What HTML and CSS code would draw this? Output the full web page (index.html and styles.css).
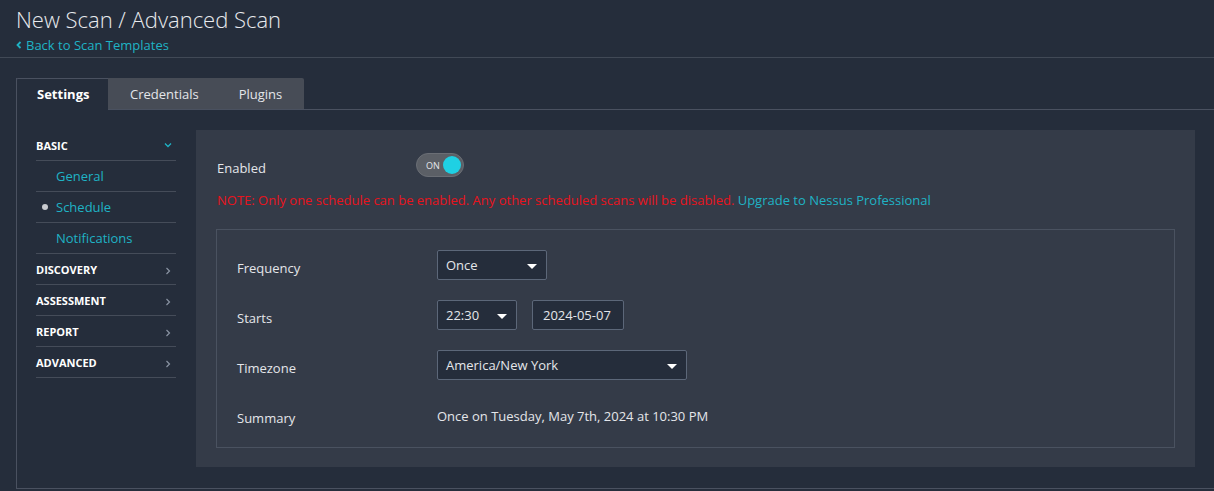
FILE: index.html
```html
<!DOCTYPE html>
<html>
<head>
<meta charset="utf-8">
<link rel="stylesheet" href="styles.css">
</head>
<body>
<header class="header">
  <h1 class="title">New Scan / Advanced Scan</h1>
  <a class="back"><svg class="back-icon" width="6" height="8" viewBox="0 0 6 8"><path d="M4.5 1 L1.5 4 L4.5 7" fill="none" stroke="currentColor" stroke-width="1.8"/></svg>Back to Scan Templates</a>
</header>
<div class="page">
  <div class="tabs">
    <div class="tab active">Settings</div>
    <div class="tab">Credentials</div>
    <div class="tab">Plugins</div>
    <div class="tab-fill"></div>
  </div>
  <div class="tab-body">
    <nav class="sidebar">
      <div class="sec">BASIC<svg class="chev" width="8" height="6" viewBox="0 0 8 6"><path d="M1 1.5 L4 4.5 L7 1.5" fill="none" stroke="currentColor" stroke-width="1.3"/></svg></div>
      <div class="sub">General</div>
      <div class="sub current"><span class="dot"></span>Schedule</div>
      <div class="sub">Notifications</div>
      <div class="sec">DISCOVERY<svg class="chev-r" width="6" height="8" viewBox="0 0 6 8"><path d="M1.5 1 L4.5 4 L1.5 7" fill="none" stroke="currentColor" stroke-width="1.2"/></svg></div>
      <div class="sec">ASSESSMENT<svg class="chev-r" width="6" height="8" viewBox="0 0 6 8"><path d="M1.5 1 L4.5 4 L1.5 7" fill="none" stroke="currentColor" stroke-width="1.2"/></svg></div>
      <div class="sec">REPORT<svg class="chev-r" width="6" height="8" viewBox="0 0 6 8"><path d="M1.5 1 L4.5 4 L1.5 7" fill="none" stroke="currentColor" stroke-width="1.2"/></svg></div>
      <div class="sec">ADVANCED<svg class="chev-r" width="6" height="8" viewBox="0 0 6 8"><path d="M1.5 1 L4.5 4 L1.5 7" fill="none" stroke="currentColor" stroke-width="1.2"/></svg></div>
    </nav>
    <main class="panel">
      <div class="enabled-row">
        <span class="label">Enabled</span>
        <div class="toggle"><span class="on">ON</span><span class="knob"></span></div>
      </div>
      <p class="note">NOTE: Only one schedule can be enabled. Any other scheduled scans will be disabled. <a class="link">Upgrade to Nessus Professional</a></p>
      <div class="box">
        <div class="row">
          <span class="label">Frequency</span>
          <div class="field">
            <div class="select w110">Once<span class="caret"></span></div>
          </div>
        </div>
        <div class="row">
          <span class="label">Starts</span>
          <div class="field">
            <div class="select w80">22:30<span class="caret"></span></div>
            <div class="input w92">2024-05-07</div>
          </div>
        </div>
        <div class="row">
          <span class="label">Timezone</span>
          <div class="field">
            <div class="select w250">America/New York<span class="caret"></span></div>
          </div>
        </div>
        <div class="row">
          <span class="label">Summary</span>
          <div class="field"><span class="summary">Once on Tuesday, May 7th, 2024 at 10:30 PM</span></div>
        </div>
      </div>
    </main>
  </div>
</div>
</body>
</html>
```
FILE: styles.css
```css
* { box-sizing: border-box; }
html, body { margin: 0; padding: 0; }
body {
  background: #252d3b;
  font-family: "Open Sans", "Noto Sans", sans-serif;
  color: #e4e6ea;
  width: 1214px;
  height: 491px;
  overflow: hidden;
}
.header {
  padding: 4px 0 0 16px;
  height: 58px;
  border-bottom: 1px solid #414956;
}
.title {
  margin: 0;
  font-size: 22px;
  font-weight: 300;
  line-height: 30px;
  color: #e8eaee;
  letter-spacing: 0;
}
.back {
  display: flex;
  align-items: center;
  gap: 4px;
  font-size: 13px;
  line-height: 20px;
  color: #1fb3c5;
  margin-top: 1px;
}
.page {
  margin-left: 16px;
  margin-top: 20px;
  width: 1220px;
  height: 411px;
  border-left: 1px solid #4a5160;
  border-bottom: 1px solid #4a5160;
  display: flex;
  flex-direction: column;
}
.tabs {
  display: flex;
  height: 32px;
  margin-left: -1px;
}
.tab {
  height: 32px;
  font-size: 13px;
  line-height: 32px;
  color: #e4e6ea;
  background: #474c56;
  border-bottom: 1px solid #4a5160;
}
.tab:nth-child(2) { padding: 0 20px 0 22px; }
.tab:nth-child(3) { padding: 0 22px 0 20px; border-top-right-radius: 2px; }
.tab.active {
  background: #252d3b;
  font-weight: 700;
  color: #ffffff;
  padding: 0 19px 0 20px;
  width: 92px;
  border-top: 1px solid #4a5160;
  border-left: 1px solid #4a5160;
  border-bottom: none;
  border-top-left-radius: 2px;
  line-height: 30px;
}
.tab-fill {
  flex: 1;
  border-bottom: 1px solid #4a5160;
}
.tab-body {
  display: flex;
  padding: 20px 0 0 19px;
  gap: 20px;
}
.sidebar {
  width: 140px;
  flex: none;
}
.sec, .sub {
  height: 31px;
  border-bottom: 1px solid #454c59;
  display: flex;
  align-items: center;
}
.sec {
  font-size: 11px;
  font-weight: 700;
  color: #ffffff;
  justify-content: space-between;
  padding-right: 5px;
}
.chev { color: #1fb3c5; margin-right: -1px; }
.chev-r { color: #8a93a3; margin-top: 3px; }
.sub {
  font-size: 13px;
  color: #1fb3c5;
  padding-left: 20px;
  position: relative;
}
.dot {
  position: absolute;
  left: 6px;
  top: 12px;
  width: 6px;
  height: 6px;
  border-radius: 50%;
  background: #c9cbd0;
}
.panel {
  width: 999px;
  height: 337px;
  background: #343b48;
  padding: 23px 20px 0 20px;
}
.enabled-row {
  display: flex;
  align-items: center;
  height: 24px;
  margin-left: 1px;
}
.enabled-row .label { padding-top: 6px; }
.label {
  font-size: 13px;
  color: #e4e6ea;
  width: 199px;
  flex: none;
}
.toggle {
  width: 48px;
  height: 24px;
  border-radius: 12px;
  background: #5b5f66;
  border: 1px solid #6a6e75;
  display: flex;
  align-items: center;
  justify-content: space-between;
  padding: 0 2px 0 9px;
}
.on {
  font-size: 9px;
  color: #e4e6ea;
}
.knob {
  width: 18px;
  height: 18px;
  border-radius: 50%;
  background: #1fd0e3;
}
.note {
  margin: 14px 0 0 1px;
  font-size: 13px;
  line-height: 18px;
  color: #e8131d;
}
.link { color: #1fb3c5; }
.box {
  margin-top: 20px;
  border: 1px solid #4a5260;
  width: 959px;
  height: 219px;
  padding: 20px 0 0 20px;
}
.row {
  display: flex;
  align-items: center;
  height: 30px;
  margin-bottom: 20px;
}
.row .label { width: 200px; padding-top: 6px; }
.row:last-child .label { padding-top: 6px; }
.field { display: flex; gap: 15px; align-items: center; }
.select, .input {
  height: 30px;
  background: #252d3b;
  border: 1px solid #5c6779;
  border-radius: 2px;
  font-size: 13px;
  color: #e4e6ea;
  display: flex;
  align-items: center;
  padding-left: 8px;
  position: relative;
}
.w110 { width: 110px; }
.w80 { width: 80px; }
.w92 { width: 92px; padding-left: 10px; }
.w250 { width: 250px; }
.caret {
  position: absolute;
  right: 9px;
  top: 13px;
  width: 0;
  height: 0;
  border-left: 5px solid transparent;
  border-right: 5px solid transparent;
  border-top: 5px solid #ffffff;
}
.summary {
  font-size: 13px;
  color: #e4e6ea;
  padding-top: 2px;
}
```
